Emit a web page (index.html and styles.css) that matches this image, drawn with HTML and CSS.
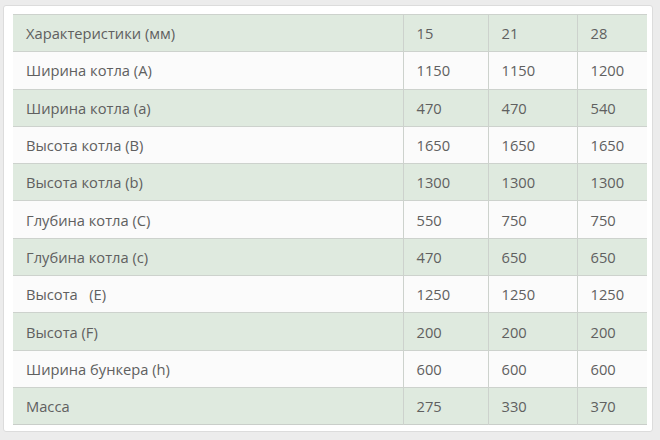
FILE: index.html
```html
<!DOCTYPE html>
<html lang="ru">
<head>
<meta charset="utf-8">
<link rel="stylesheet" href="styles.css">
</head>
<body>
<div class="card">
  <table class="specs">
    <colgroup>
      <col class="c-name"><col class="c-15"><col class="c-21"><col class="c-28">
    </colgroup>
    <tbody>
      <tr><td>Характеристики (мм)</td><td>15</td><td>21</td><td>28</td></tr>
      <tr><td>Ширина котла (A)</td><td>1150</td><td>1150</td><td>1200</td></tr>
      <tr><td>Ширина котла (a)</td><td>470</td><td>470</td><td>540</td></tr>
      <tr><td>Высота котла (B)</td><td>1650</td><td>1650</td><td>1650</td></tr>
      <tr><td>Высота котла (b)</td><td>1300</td><td>1300</td><td>1300</td></tr>
      <tr><td>Глубина котла (C)</td><td>550</td><td>750</td><td>750</td></tr>
      <tr><td>Глубина котла (c)</td><td>470</td><td>650</td><td>650</td></tr>
      <tr><td>Высота &nbsp;&nbsp;(E)</td><td>1250</td><td>1250</td><td>1250</td></tr>
      <tr><td>Высота (F)</td><td>200</td><td>200</td><td>200</td></tr>
      <tr><td>Ширина бункера (h)</td><td>600</td><td>600</td><td>600</td></tr>
      <tr><td>Масса</td><td>275</td><td>330</td><td>370</td></tr>
    </tbody>
  </table>
</div>
</body>
</html>
```

FILE: styles.css
```css
html, body {
  margin: 0;
  padding: 0;
  background: #ececec;
  width: 660px;
  height: 440px;
  overflow: hidden;
}

body {
  padding: 5px 0 0 3px;
  box-sizing: border-box;
  font-family: "Open Sans", "Noto Sans", sans-serif;
}

.card {
  width: 650px;
  height: 427px;
  box-sizing: border-box;
  background: #fff;
  border: 1px solid #dcdcdc;
  border-radius: 3px;
  padding: 8px 5px 0 9px;
}

.specs {
  width: 634px;
  border-collapse: collapse;
  table-layout: fixed;
  border-top: 1px solid #c9cec9;
  border-bottom: 1px solid #c9cec9;
}

.c-name { width: 390px; }
.c-15 { width: 85px; }
.c-21 { width: 89px; }
.c-28 { width: 70px; }

.specs tr {
  height: 37.3px;
}

.specs tr:nth-child(odd) {
  background: #dfeadf;
}

.specs tr:nth-child(even) {
  background: #fbfbfb;
}

.specs td {
  padding: 0 13px;
  font-size: 14.7px;
  color: #606060;
  border-top: 1px solid #cdd2cd;
  vertical-align: middle;
  white-space: nowrap;
}

.specs td + td {
  border-left: 1px solid #cdd2cd;
  padding-left: 13px;
}
```
